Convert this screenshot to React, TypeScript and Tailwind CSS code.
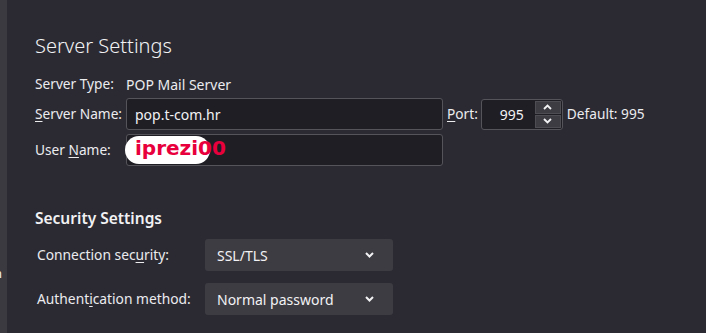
import React from "react";

const font = { fontFamily: '"Noto Sans", "Open Sans", sans-serif' };

function Field({
  value,
  className = "",
}: {
  value?: string;
  className?: string;
}) {
  return (
    <div
      className={`h-[32px] flex items-center rounded-[3px] border border-[#55545b] bg-[#1f1e25] px-[8px] text-[14px] text-[#f2f2f4] ${className}`}
    >
      {value}
    </div>
  );
}

function Dropdown({ value }: { value: string }) {
  return (
    <div className="w-[188px] h-[32px] flex items-center justify-between rounded-[3px] bg-[#3d3c43] pl-[12px] pr-[19px] text-[14px] text-[#f2f2f4]">
      <span>{value}</span>
      <svg width="9" height="6" viewBox="0 0 9 6">
        <path d="M1 1 L4.5 4.5 L8 1" stroke="#f2f2f4" strokeWidth="2" fill="none" />
      </svg>
    </div>
  );
}

export default function App() {
  return (
    <div
      className="w-[706px] h-[333px] flex bg-[#2b2a33] text-[#ececef] overflow-hidden"
      style={font}
    >
      <div className="w-[7px] shrink-0 bg-[#3b3a40] relative overflow-hidden">
        <span className="absolute left-[-6px] top-[264px] text-[13px] text-[#f2f2f4]">
          n
        </span>
      </div>

      <div className="flex-1 pl-[28px] pt-[32px] flex flex-col">
        <h1 className="text-[20px] font-light leading-[28px] text-[#f2f2f4]">
          Server Settings
        </h1>

        <div className="mt-[16px] flex items-center h-[16px] text-[13.7px]">
          <span className="w-[91px] shrink-0">Server Type:</span>
          <span className="text-[14px]">POP Mail Server</span>
        </div>

        <div className="mt-[6px] flex items-center text-[13.7px]">
          <span className="w-[91px] shrink-0">
            <u className="underline-offset-2">S</u>erver Name:
          </span>
          <Field value="pop.t-com.hr" className="w-[317px]" />
          <span className="ml-[4px]">
            <u className="underline-offset-2">P</u>ort:
          </span>
          <div className="ml-[3px] w-[82px] h-[31px] flex rounded-[3px] border border-[#55545b] bg-[#1f1e25]">
            <div className="flex-1 flex items-center justify-end pr-[10px] text-[14px] text-[#f2f2f4]">
              995
            </div>
            <div className="w-[28px] flex flex-col p-[1px] gap-[1px]">
              <div className="flex-1 flex items-center justify-center bg-[#3d3c43] border border-[#4e4d54]">
                <svg width="9" height="6" viewBox="0 0 9 6">
                  <path d="M1 5 L4.5 1.5 L8 5" stroke="#f2f2f4" strokeWidth="1.8" fill="none" />
                </svg>
              </div>
              <div className="flex-1 flex items-center justify-center bg-[#3d3c43] border border-[#4e4d54]">
                <svg width="9" height="6" viewBox="0 0 9 6">
                  <path d="M1 1 L4.5 4.5 L8 1" stroke="#f2f2f4" strokeWidth="1.8" fill="none" />
                </svg>
              </div>
            </div>
          </div>
          <span className="ml-[4px]">Default: 995</span>
        </div>

        <div className="mt-[4px] flex items-center text-[13.7px]">
          <span className="w-[91px] shrink-0">
            User <u className="underline-offset-2">N</u>ame:
          </span>
          <div className="relative">
            <Field className="w-[317px]" />
            <div className="absolute left-[-1px] top-[2px] w-[85px] h-[28px] rounded-full bg-white" />
            <span
              className="absolute left-[9px] top-[0px] text-[20px] font-bold leading-[28px] text-[#e8003d]"
              style={{ fontFamily: '"DejaVu Sans", sans-serif' }}
            >
              iprezi00
            </span>
          </div>
        </div>

        <h2 className="mt-[42px] text-[15.5px] font-semibold leading-[20px] text-[#f2f2f4]">
          Security Settings
        </h2>

        <div className="mt-[11px] pl-[2px] flex items-center text-[13.8px]">
          <span className="w-[168px] shrink-0">
            Connection sec<u className="underline-offset-2">u</u>rity:
          </span>
          <Dropdown value="SSL/TLS" />
        </div>

        <div className="mt-[12px] pl-[2px] flex items-center text-[13.8px]">
          <span className="w-[168px] shrink-0">
            Authent<u className="underline-offset-2">i</u>cation method:
          </span>
          <Dropdown value="Normal password" />
        </div>
      </div>
    </div>
  );
}
